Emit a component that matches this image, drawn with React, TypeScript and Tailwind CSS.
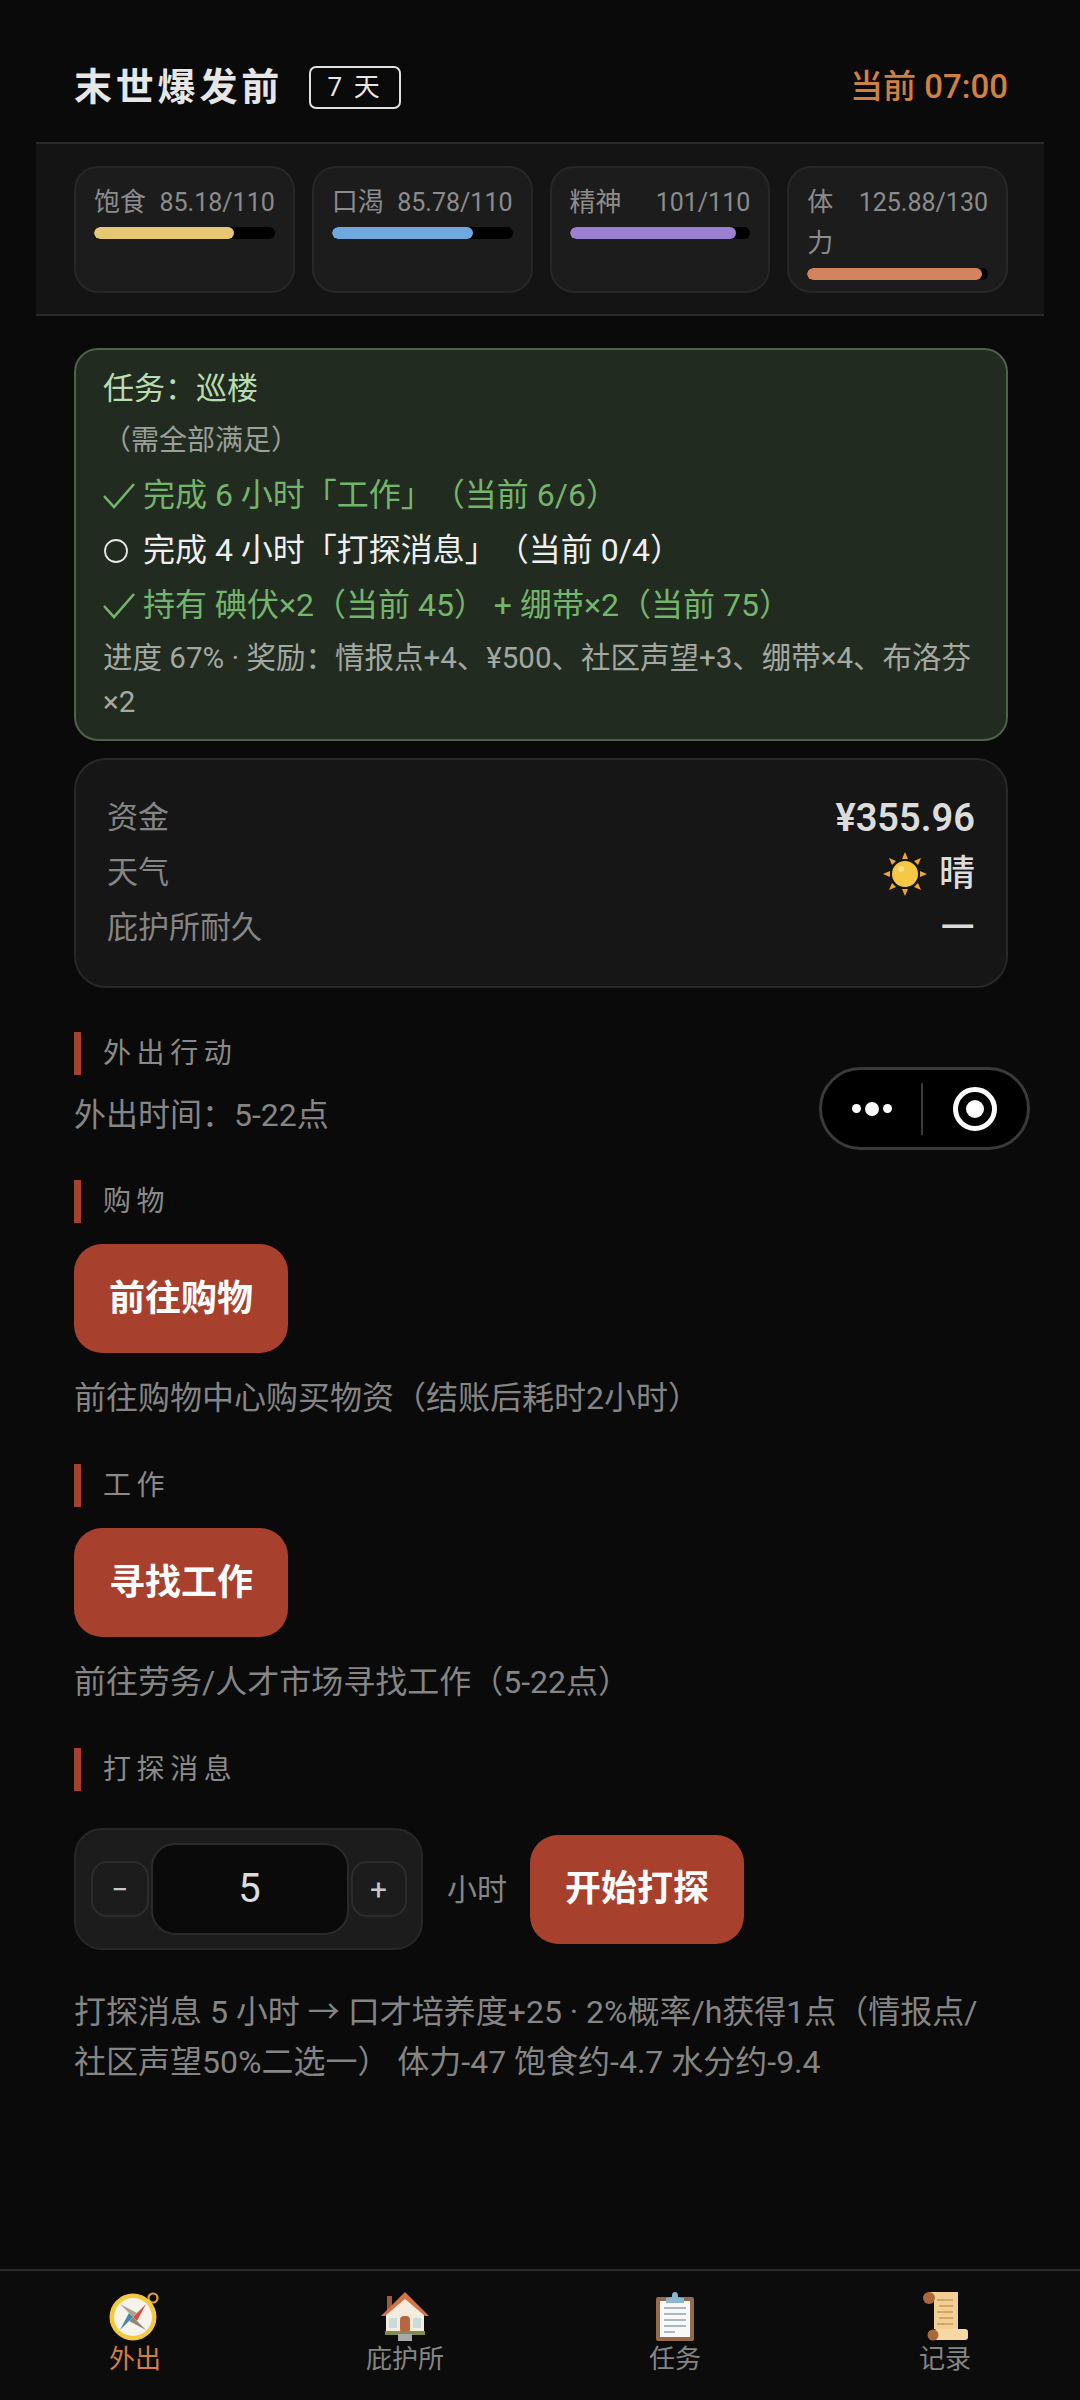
const font = 'font-["Roboto","Noto_Sans_CJK_SC",sans-serif]';

const stats = [
  { label: '饱食', value: '85.18/110', pct: 77.4, color: 'bg-[#e6c873]' },
  { label: '口渴', value: '85.78/110', pct: 78, color: 'bg-[#6fa8dc]' },
  { label: '精神', value: '101/110', pct: 92, color: 'bg-[#9b7fd1]' },
  { label: '体力', value: '125.88/130', pct: 96.8, color: 'bg-[#d4835f]' },
];

const Check = () => (
  <svg width="32" height="30" viewBox="0 0 32 30" fill="none" stroke="#74b56c" strokeWidth="2.6" className="shrink-0">
    <path d="M1 15 L11 26 L31 3" />
  </svg>
);

const Ring = () => (
  <svg width="32" height="30" viewBox="0 0 32 30" fill="none" stroke="#e8e8e8" strokeWidth="1.8" className="shrink-0">
    <circle cx="13" cy="15" r="11" />
  </svg>
);

const Sun = () => (
  <svg width="44" height="44" viewBox="0 0 44 44">
    <g fill="#eda92f">
      <path d="M22 0 L25 7 L19 7Z" />
      <path d="M22 44 L25 37 L19 37Z" />
      <path d="M0 22 L7 19 L7 25Z" />
      <path d="M44 22 L37 19 L37 25Z" />
      <path d="M6 6 L13 9 L9 13Z" />
      <path d="M38 6 L35 13 L31 9Z" />
      <path d="M6 38 L9 31 L13 35Z" />
      <path d="M38 38 L31 35 L35 31Z" />
    </g>
    <circle cx="22" cy="22" r="13" fill="#f6c945" />
    <circle cx="18" cy="17" r="3" fill="#fbe08a" />
  </svg>
);

const Compass = () => (
  <svg width="52" height="50" viewBox="0 0 52 50">
    <circle cx="44" cy="7" r="4.5" fill="none" stroke="#e0a92e" strokeWidth="2.2" />
    <circle cx="24" cy="26" r="23.5" fill="#f3c93f" />
    <circle cx="24" cy="26" r="19" fill="#f6f3ea" />
    <path d="M24 26 L37 13 L28 30Z" fill="#d9503f" />
    <path d="M24 26 L11 39 L20 22Z" fill="#3f88a8" />
    <path d="M24 26 L11 13 L28 22Z" fill="#a9a392" />
    <path d="M24 26 L37 39 L20 30Z" fill="#8d8878" />
  </svg>
);

const House = () => (
  <svg width="50" height="50" viewBox="0 0 50 50">
    <rect x="7" y="5" width="5" height="16" fill="#9c5a3c" />
    <path d="M6 42 L6 22 L25 4 L44 22 L44 42Z" fill="#f4ecdc" />
    <path d="M1 25 L25 1 L49 25 L45 25 L25 8 L5 25Z" fill="#d2734a" />
    <rect x="20" y="25" width="10" height="17" rx="4" fill="#bb6440" />
    <rect x="9" y="27" width="8" height="10" fill="#c9dcdc" />
    <rect x="33" y="27" width="8" height="10" fill="#c9dcdc" />
    <rect x="5" y="40" width="40" height="4" fill="#7f8c4c" />
    <rect x="18" y="43" width="14" height="7" fill="#a8a8a8" />
  </svg>
);

const Clipboard = () => (
  <svg width="40" height="50" viewBox="0 0 40 50">
    <rect x="1" y="6" width="38" height="44" rx="2" fill="#96694a" />
    <rect x="5" y="10" width="30" height="36" fill="#f8f8f6" />
    <path d="M20 1 C23 1 23 4 23 6 L29 7 L29 12 L11 12 L11 7 L17 6 C17 4 17 1 20 1Z" fill="#8cb6cf" />
    <g fill="#a9b8c2">
      <rect x="9" y="16" width="22" height="2" />
      <rect x="9" y="22" width="22" height="2" />
      <rect x="9" y="28" width="22" height="2" />
      <rect x="9" y="34" width="22" height="2" />
      <rect x="9" y="40" width="11" height="2" />
    </g>
  </svg>
);

const Scroll = () => (
  <svg width="50" height="50" viewBox="0 0 50 50">
    <path d="M8 1 L38 1 L38 38 L14 38 L14 8Z" fill="#f2cf94" />
    <rect x="14" y="38" width="34" height="11" rx="3" fill="#f6d8a3" />
    <circle cx="9" cy="7" r="6" fill="#a8683c" />
    <circle cx="13" cy="44" r="5.5" fill="#a8683c" />
    <g fill="#d3a661">
      <rect x="17" y="8" width="16" height="2" />
      <rect x="19" y="14" width="14" height="2" />
      <rect x="17" y="20" width="16" height="2" />
      <rect x="19" y="26" width="14" height="2" />
      <rect x="17" y="32" width="16" height="2" />
    </g>
  </svg>
);

const tabs = [
  { label: '外出', icon: <Compass />, active: true },
  { label: '庇护所', icon: <House />, active: false },
  { label: '任务', icon: <Clipboard />, active: false },
  { label: '记录', icon: <Scroll />, active: false },
];

const SectionTitle = ({ children }: { children: string }) => (
  <div className="border-l-[7px] border-[#a8402e] pl-[22px] h-[43px] flex items-center text-[28px] tracking-[0.2em] text-[#8a8a8a]">
    {children}
  </div>
);

const RedButton = ({ children }: { children: string }) => (
  <button className="w-[214px] h-[109px] shrink-0 rounded-[28px] bg-[#a8402e] text-white text-[36px] font-bold">
    {children}
  </button>
);

export default function App() {
  return (
    <div lang="zh-CN" className={`${font} [text-spacing-trim:space-all] relative h-[2400px] bg-[#0a0a0a] flex flex-col`}>
      <div className="flex-1 px-[36px]">
        <header className="h-[144px] border-b-2 border-[#2a2a2a] pl-[38px] pr-[36px] pt-[32px] flex items-center justify-between">
          <div className="flex items-center gap-[26px]">
            <h1 className="text-[38px] leading-none font-bold tracking-[0.1em] text-[#e6e6e6]">末世爆发前</h1>
            <span className="w-[92px] h-[43px] border-2 border-[#e0e0e0] rounded-[7px] flex items-center justify-center text-[26px] text-[#e6e6e6] tracking-[0.1em]">
              7 天
            </span>
          </div>
          <div className="text-[33px] font-medium text-[#d0803f]">当前 07:00</div>
        </header>

        <section className="h-[172px] bg-[#141414] border-b-2 border-[#2a2a2a] pl-[38px] pr-[36px] pt-[22px] grid grid-cols-4 gap-[17px] items-start">
          {stats.map((s) => (
            <div key={s.label} className="h-[127px] rounded-[24px] bg-[#1c1c1c] border-2 border-[#272727] px-[18px] pt-[14px]">
              <div className="flex justify-between gap-[6px] text-[25px] leading-[41px] text-[#8c8c8c]">
                <span className="text-[26px]">{s.label}</span>
                <span>{s.value}</span>
              </div>
              <div className="mt-[4px] h-[12px] rounded-full bg-black overflow-hidden">
                <div className={`h-full rounded-full ${s.color}`} style={{ width: `${s.pct}%` }} />
              </div>
            </div>
          ))}
        </section>

        <main className="pl-[38px] pr-[36px] pt-[32px]">
          <div className="h-[393px] rounded-[24px] bg-[#222b20] border-2 border-[#4c6348] px-[27px] pt-[14px] text-[32px]">
            <div className="leading-[50px] text-[31px] text-[#b9dcb0]">任务：巡楼</div>
            <div className="leading-[54px] text-[28px] text-[#9a9f98]">（需全部满足）</div>
            <div className="flex items-center gap-[8px] leading-[55px] text-[#74b56c]"><Check />完成 6 小时「工作」（当前 6/6）</div>
            <div className="flex items-center gap-[8px] leading-[55px] text-[#efefef]"><Ring />完成 4 小时「打探消息」（当前 0/4）</div>
            <div className="flex items-center gap-[8px] leading-[55px] text-[#74b56c]"><Check />持有 碘伏×2（当前 45） + 绷带×2（当前 75）</div>
            <div className="text-[29.5px] leading-[44px] text-[#a3a8a1] mt-[3px]">进度 67% · 奖励：情报点+4、¥500、社区声望+3、绷带×4、布洛芬×2</div>
          </div>

          <div className="mt-[17px] h-[230px] rounded-[32px] bg-[#161616] border-2 border-[#282828] px-[31px] pt-[31px] text-[31px]">
            <div className="flex justify-between items-center h-[55px]">
              <span className="text-[#858585]">资金</span>
              <span className="text-[38px] font-semibold text-[#dcdcdc]">¥355.96</span>
            </div>
            <div className="flex justify-between items-center h-[55px]">
              <span className="text-[#858585]">天气</span>
              <span className="flex items-center gap-[12px] text-[36px] font-medium text-[#dcdcdc]"><Sun />晴</span>
            </div>
            <div className="flex justify-between items-center h-[55px]">
              <span className="text-[#858585]">庇护所耐久</span>
              <span className='pb-[16px] text-[38px] font-bold leading-none text-[#dcdcdc] font-["Noto_Sans_CJK_SC",sans-serif]'>—</span>
            </div>
          </div>

          <div className="mt-[44px]">
            <SectionTitle>外出行动</SectionTitle>
            <p className="mt-[18px] text-[32px] leading-[44px] text-[#858585]">外出时间：5-22点</p>
          </div>

          <div className="mt-[43px]">
            <SectionTitle>购物</SectionTitle>
            <div className="mt-[21px]"><RedButton>前往购物</RedButton></div>
            <p className="mt-[22px] text-[32px] leading-[46px] text-[#858585]">前往购物中心购买物资（结账后耗时2小时）</p>
          </div>

          <div className="mt-[43px]">
            <SectionTitle>工作</SectionTitle>
            <div className="mt-[21px]"><RedButton>寻找工作</RedButton></div>
            <p className="mt-[22px] text-[32px] leading-[46px] text-[#858585]">前往劳务/人才市场寻找工作（5-22点）</p>
          </div>

          <div className="mt-[43px]">
            <SectionTitle>打探消息</SectionTitle>
            <div className="mt-[37px] flex items-center">
              <div className="w-[349px] h-[122px] rounded-[28px] bg-[#1c1c1c] border-2 border-[#272727] flex items-center justify-center gap-[2px]">
                <button className="w-[58px] h-[56px] rounded-[16px] bg-[#1c1c1c] border-2 border-[#2c2c2c] text-[30px] text-[#c8c8c8]">−</button>
                <div className="w-[198px] h-[92px] rounded-[24px] bg-[#0a0a0a] border-2 border-[#2a2a2a] flex items-center justify-center text-[40px] text-[#dcdcdc]">5</div>
                <button className="w-[56px] h-[56px] rounded-[16px] bg-[#1c1c1c] border-2 border-[#2c2c2c] text-[30px] text-[#c8c8c8]">+</button>
              </div>
              <span className="ml-[24px] mr-[23px] text-[30px] text-[#858585]">小时</span>
              <RedButton>开始打探</RedButton>
            </div>
            <p className="mt-[37px] text-[32px] leading-[50px] text-[#858585]">打探消息 5 小时 → 口才培养度+25 · 2%概率/h获得1点（情报点/社区声望50%二选一） 体力-47 饱食约-4.7 水分约-9.4</p>
          </div>
        </main>
      </div>

      <nav className="h-[131px] bg-[#0c0c0c] border-t-2 border-[#2a2a2a] grid grid-cols-4 pt-[20px]">
        {tabs.map((t) => (
          <div key={t.label} className="flex flex-col items-center">
            <div className="h-[50px] flex items-center justify-center">{t.icon}</div>
            <span className={`text-[26px] leading-[36px] ${t.active ? 'text-[#d0803f]' : 'text-[#858585]'}`}>{t.label}</span>
          </div>
        ))}
      </nav>

      <div className="absolute left-[819px] top-[1067px] w-[211px] h-[83px] rounded-full bg-black border-[3px] border-[#3a3a3a] flex items-center">
        <div className="w-[101px] flex items-center justify-center gap-[4px]">
          <span className="w-[9px] h-[9px] rounded-full bg-white" />
          <span className="w-[14px] h-[14px] rounded-full bg-white" />
          <span className="w-[9px] h-[9px] rounded-full bg-white" />
        </div>
        <div className="w-[2px] h-[52px] bg-[#3a3a3a]" />
        <div className="w-[106px] flex items-center justify-center">
          <div className="w-[44px] h-[44px] rounded-full border-[5px] border-white flex items-center justify-center">
            <span className="w-[18px] h-[18px] rounded-full bg-white" />
          </div>
        </div>
      </div>
    </div>
  );
}
